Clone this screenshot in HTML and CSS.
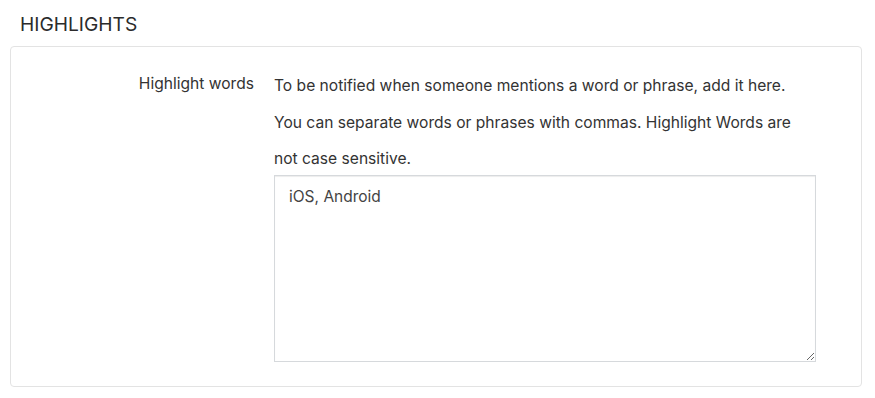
FILE: index.html
```html
<!DOCTYPE html>
<html>
<head>
<meta charset="utf-8">
<link rel="stylesheet" href="styles.css">
</head>
<body>
<div class="page">
  <h3 class="section-title">HIGHLIGHTS</h3>
  <div class="panel">
    <div class="row">
      <label class="row-label" for="hw">Highlight words</label>
      <div class="row-body">
        <p class="help">To be notified when someone mentions a word or phrase, add it here. You can separate words or phrases with commas. Highlight Words are not case sensitive.</p>
        <textarea id="hw" class="words">iOS, Android</textarea>
      </div>
    </div>
  </div>
</div>
</body>
</html>
```
FILE: styles.css
```css
html, body {
  margin: 0;
  padding: 0;
  background: #ffffff;
}
body {
  font-family: Inter, "Helvetica Neue", Arial, sans-serif;
  color: #333;
}
.page {
  padding: 0 13px 0 10px;
}
.section-title {
  margin: 0;
  padding: 12px 0 0 10px;
  height: 46px;
  box-sizing: border-box;
  font-size: 19.2px;
  font-weight: 400;
  line-height: 24px;
  color: #2b2b2b;
}
.panel {
  border: 1px solid #e3e3e3;
  border-radius: 4px;
  height: 341px;
  box-sizing: border-box;
}
.row {
  display: flex;
  padding-top: 21px;
}
.row-label {
  width: 243px;
  flex: none;
  text-align: right;
  font-size: 15.6px;
  line-height: 32px;
  color: #333;
}
.row-body {
  margin-left: 20px;
  width: 542px;
}
.help {
  margin: 0;
  font-size: 15.6px;
  line-height: 36.5px;
  color: #333;
  width: 530px;
}
.words {
  display: block;
  box-sizing: border-box;
  width: 542px;
  height: 187px;
  margin-top: -3px;
  padding: 11px 14px;
  border: 1px solid #d6d9dc;
  box-shadow: inset 0 1px 1px rgba(0,0,0,0.075);
  font-family: inherit;
  font-size: 15.5px;
  line-height: 20px;
  color: #444;
  resize: vertical;
  outline: none;
}
```
